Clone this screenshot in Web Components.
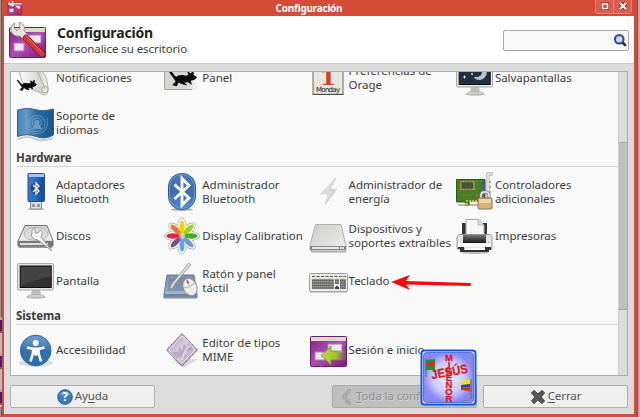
<!DOCTYPE html>
<html lang="es"><head><meta charset="utf-8"><title>Configuración</title>
<style>
html,body{margin:0;width:640px;height:417px;overflow:hidden;background:#aaa}
body{font-family:"Noto Sans","Open Sans",sans-serif;font-size:11.5px;color:#3c3c3c}
</style></head><body>
<settings-window></settings-window>
<script>
const wrench = `<path d="M5 0Q0 2 1 8Q3 14 10 13L14 17L18 12L14 8Q16 1 9 -1L10 5L7 8L4 5Z" fill="#e5e5df" stroke="#858880" stroke-width=".8"/><path d="M16 15L32 31" stroke="#871b22" stroke-width="6.4" stroke-linecap="round"/><path d="M16 15L32 31" stroke="#da3a30" stroke-width="5" stroke-linecap="round"/><path d="M16 13L31 28" stroke="#f07360" stroke-width="1"/>`;
const panelBase = `<defs><linearGradient id="p" x2="1" y2="1"><stop stop-color="#7e2486"/><stop offset=".5" stop-color="#b04fb2"/><stop offset="1" stop-color="#7c167f"/></linearGradient></defs><rect x="-.5" y="4.5" width="36" height="30" rx="1" fill="url(#p)" stroke="#642064"/><path d="M0 5H35V9H0Z" fill="#dcd9c6"/><path d="M17 12H31V20H17ZM4 20H14V28H4Z" fill="#f1e7f3" stroke="#ba73be"/>`;
const mouse = (x,y,s)=>`<g transform="translate(${x} ${y}) scale(${s})" fill="#080808"><path d="M0 0Q3 1 5 5L7 6Q10 3 16 5L19 4L18 1L21 3L23 0L23 4L26 6L24 8L20 9L21 12L18 10L14 11L16 13L12 12L9 10L7 14L4 13L7 10L5 7Z" stroke="#080808" stroke-width="1"/></g>`;
const monitor = screen => `<ellipse cx="18" cy="34" rx="10" ry="1.8" fill="#aaa" opacity=".7"/><path d="M14 26H22L23 33H13Z" fill="#bdbdbd"/><path d="M11 32H25L27 34H9Z" fill="#ddd" stroke="#aaa" stroke-width=".6"/><rect x="-.5" y=".5" width="36" height="26.5" rx="1.2" fill="#e2e2e0" stroke="#aaaaa7"/><rect x="2.2" y="3" width="31" height="21.5" fill="${screen}" stroke="#111"/>`;
const icons = {
 settings: panelBase+wrench,
 notify:`<defs><linearGradient id="g" x2="1"><stop stop-color="#fcfcfc"/><stop offset=".7" stop-color="#d3d3cf"/><stop offset="1" stop-color="#f5f5f1"/></linearGradient></defs><path d="M2 14Q0 4 10 5L24 11Q29 15 30 28Q31 35 25 35L21 32Q8 29 4 21Z" fill="url(#g)" stroke="#b0b0ab"/><path d="M18 8L27 29M24 28Q28 24 30 29L29 33L24 32Z" fill="none" stroke="#aaa9a0"/>${mouse(-1,20,.75)}`,
 panel:`<defs><linearGradient id="g"><stop offset=".6" stop-color="#d5d7d0"/><stop offset="1" stop-color="#d5d7d0" stop-opacity="0"/></linearGradient></defs><path d="M.5 2H35V29.500H.5Z" fill="url(#g)"/><path d="M.5 2V29.500H28" fill="none" stroke="#a3a69b"/>${mouse(5,11,1.05)}`,
 calendar:`<rect x="2" y="1" width="30" height="33.500" fill="#e6e6df" stroke="#686962"/><path d="M2 34.300H32.500" stroke="#4c4d49"/><text x="17" y="24.500" text-anchor="middle" font-family="DejaVu Serif" font-size="23" font-weight="bold" fill="#d44020">1</text><text x="17" y="32" text-anchor="middle" font-family="DejaVu Sans" font-size="7" textLength="24" fill="#111">Monday</text>`,
 saver:monitor('#20303e')+`<path d="M28 7Q33 17 23 20Q18 20 17 17Q26 18 25 10Z" fill="#b9c4ce"/><path d="M6 17h3M7.500 15.500v3M14 14h2M15 13v2" stroke="#fff" stroke-width=".8"/>`,
 flag:`<defs><linearGradient id="g"><stop stop-color="#4585ba"/><stop offset=".25" stop-color="#6599c4"/><stop offset=".55" stop-color="#286ba5"/><stop offset="1" stop-color="#1b568e"/></linearGradient></defs><path d="M0 34Q10 30 17 34Q25 37 35 33" stroke="#ccc" stroke-width="2" fill="none"/><path d="M-.5 5Q9 2 17 4.500T35.500 4V30Q27 35 18 31.500T-.5 31.500Z" fill="url(#g)" stroke="#23659d"/><g fill="none" stroke="#85b0d0" opacity=".75"><circle cx="19" cy="18.500" r="8" stroke-width=".8"/><circle cx="19" cy="17.500" r="4.500"/><path d="M9 13Q6 27 19 29Q32 27 29 13" stroke-width=".8"/></g><path d="M14 24L17 19Q15 15 19 15Q23 15 21 19L24 24Z" fill="#79a8cb" opacity=".8"/>`,
 usb:`<defs><linearGradient id="g"><stop stop-color="#3e7ccc"/><stop offset=".5" stop-color="#2867bd"/><stop offset="1" stop-color="#0e479d"/></linearGradient></defs><ellipse cx="18" cy="35" rx="9" ry="1.200" fill="#bbb"/><rect x="12.500" y="27" width="11" height="8" fill="#ddd" stroke="#8d8d88"/><path d="M14 30h3v3h-3zM19 30h3v3h-3z" fill="#989890"/><rect x="10" y="-.5" width="16.500" height="28" rx="1" fill="url(#g)" stroke="#225197"/><path d="M11 0H26V3H11Z" fill="#a5c5eb"/><circle cx="18.500" cy="14.500" r="6" fill="#234a86"/><path d="M15 11L21 17L18 20V9L21 12L15 18" fill="none" stroke="#fff" stroke-width="1.200"/>`,
 bluetooth:`<defs><linearGradient id="g" x2="0" y2="1"><stop stop-color="#4d79b7"/><stop offset=".5" stop-color="#3c6db0"/><stop offset="1" stop-color="#508dce"/></linearGradient></defs><ellipse cx="18" cy="35.500" rx="11" ry="1.500" fill="#aaa"/><rect x="4.500" y="-.5" width="27" height="36" rx="13" fill="url(#g)" stroke="#285990"/><rect x="5.500" y=".5" width="25" height="34" rx="12" fill="none" stroke="#83abd8" stroke-width=".7"/><path d="M10.500 10.500L25 24L18 31V4.500L25 11.500L10.500 25" fill="none" stroke="white" stroke-width="2.800"/>`,
 power:`<path d="M25 4L9.500 20H17L14 31L26 15H19.500Z" fill="#deded8" stroke="#d0d0ca" stroke-width=".7"/><path d="M24 6L18 16H23L15 29L24 17H18Z" fill="#c7c6bf"/>`,
 driver:`<path d="M1 31H29" stroke="#bbb" stroke-width="2"/><path d="M-.5 5.500H28V27H12V31H9V28H-.5Z" fill="#497d27" stroke="#315b1b"/><path d="M3 21H26M3 10V20M20 6V24" stroke="#658c35" stroke-width=".7"/><rect x="3.500" y="7" width="14" height="9" fill="#b7a935"/><rect x="4.700" y="8.200" width="11.600" height="6.600" fill="#4b504b"/><path d="M5 7V16M8 7V16M11 7V16M14 7V16" stroke="#4b5832" stroke-width=".7"/><g fill="#3659a0"><path d="M25 8h3v3h-3zM25 13h3v3h-3zM25 18h3v3h-3z"/></g><path d="M10 31V27H23V31" stroke="#c7bc42" stroke-width="2" stroke-dasharray="2 1" fill="none"/><path d="M36 0H31V28" stroke="#999" stroke-width="3" fill="none"/><path d="M36 0H31V28" stroke="#ecece8" stroke-width="1.700" fill="none"/><path d="M33 7v2M33 12v2M33 17v2" stroke="#aaa" stroke-width="2"/><path d="M24 25V21Q24 18 28 18T32 21V25" fill="none" stroke="#777" stroke-width="3"/><path d="M24 25V21Q24 18 28 18T32 21V25" fill="none" stroke="#ddd" stroke-width="1.800"/><rect x="21" y="24" width="14" height="11" rx="1" fill="#d4b17f" stroke="#9c7442"/><path d="M22 25H34V29H22Z" fill="#ebd4ae"/>`,
 disk:`<defs><linearGradient id="g" x2="0" y2="1"><stop stop-color="#ccc"/><stop offset=".6" stop-color="#f1f1ef"/><stop offset="1" stop-color="#888"/></linearGradient></defs><path d="M1 29H34" stroke="#bbb" stroke-width="2"/><path d="M7 7.500H29L35 23V28Q34 29 32 29H2Q0 29 0 27V23Z" fill="url(#g)" stroke="#777"/><path d="M0 23H35V28H0Z" fill="#777"/><path d="M2 26H30" stroke="#ddd" stroke-width="2"/><ellipse cx="18" cy="16" rx="12" ry="6.500" fill="#dcdcda" stroke="#b5b5b3"/><path d="M14 16Q13 11 17 10V15H20L22 12Q26 14 23 19L34 33L20 22Q16 22 14 19L13 17Z" fill="#f3f3f3" stroke="#888" stroke-width=".8"/>`,
 color:`<g transform="translate(18 18)"><g fill="#fff" stroke="#9c9c9c" stroke-width="4">${[0,45,90,135,180,225,270,315].map(a=>`<path transform="rotate(${a})" d="M0 -2C-4 -7 -3 -14 0 -16C3 -14 4 -7 0 -2Z"/>`).join('')}</g><g fill="#fff" stroke="#fff" stroke-width="2.800">${[0,45,90,135,180,225,270,315].map(a=>`<path transform="rotate(${a})" d="M0 -1C-4 -7 -3 -14 0 -16C3 -14 4 -7 0 -1Z"/>`).join('')}</g>${[['#f0d500',0],['#94d51d',45],['#3daf20',90],['#7795d4',135],['#63a4e7',180],['#79518d',225],['#df2537',270],['#ed7734',315]].map(([c,a])=>`<path transform="rotate(${a})" d="M0 0C-4 -7 -3 -14 0 -16C3 -14 4 -7 0 0Z" fill="${c}"/>`).join('')}<circle r="3" fill="#fff" opacity=".45"/></g>`,
 drive:`<defs><linearGradient id="g" x2="1" y2="1"><stop stop-color="#ccc"/><stop offset="1" stop-color="#eeeeeb"/></linearGradient></defs><path d="M0 33.500H35" stroke="#aaa" stroke-width="2"/><path d="M4.500 6.500H30L35 28V32Q35 33 33 33H1Q-1 33-1 31V27Z" fill="url(#g)" stroke="#b0b0ad"/><path d="M-1 28H35V32H-1Z" fill="#858583"/><path d="M1 30H28" stroke="#e5e5e5" stroke-width="2"/><path d="M29 30H33" stroke="#ddd" stroke-width="2"/>`,
 printer:`<defs><linearGradient id="g" x2="0" y2="1"><stop stop-color="#777"/><stop offset="1" stop-color="#151515"/></linearGradient></defs><ellipse cx="18" cy="34.500" rx="14" ry="1.500" fill="#bbb"/><path d="M5 5H30V19H5Z" fill="#333"/><path d="M9 17V1.500H22L27 7V17Z" fill="#f6f6f6" stroke="#aaa"/><path d="M21 2V7H27" fill="#ddd" stroke="#bbb"/><path d="M2 16.500H33L35 19V31H0V19Z" fill="#e4e4e2" stroke="#969693"/><path d="M6 17H29V25H6Z" fill="url(#g)"/><path d="M1 27H34" stroke="#fff" stroke-width="3"/><path d="M1 31V29H7V32H28V29H34V32H32V34H3V31Z" fill="#333"/><path d="M8 31H28" stroke="#fff" stroke-width="2"/><path d="M31 24h1v1h-1z" fill="#62b748"/>`,
 monitor:monitor('#303030')+`<path d="M3 4H33V13Q15 18 3 23Z" fill="#777" opacity=".27"/>`,
 pointer:`<defs><linearGradient id="g" x2="0" y2="1"><stop stop-color="#7b90ad"/><stop offset="1" stop-color="#aebdce"/></linearGradient></defs><path d="M3 12H30L33 31V35H0V31Z" fill="url(#g)" stroke="#657995"/><path d="M5 15H27L30 28H3Z" fill="#6f86a5" opacity=".65"/><path d="M0 31H33V34H0Z" fill="#71849e"/><path d="M26 .5L10 20L7 25" stroke="#888e90" stroke-width="3" fill="none"/><path d="M26 .5L10 20L7 25" stroke="#e5e7e7" stroke-width="1.700" fill="none"/><g transform="rotate(-25 26 24)"><ellipse cx="26" cy="24" rx="6.800" ry="9" fill="#ededeb" stroke="#8f918f"/><path d="M20 22Q26 25 32 22M26 15V23" stroke="#bbb" fill="none"/><ellipse cx="26" cy="18.500" rx="1" ry="1.800" fill="#c74444"/></g>`,
 keyboard:`<rect x="-1.500" y="10.500" width="38" height="18" rx="1" fill="#e7e7e4" stroke="#a1a19e"/><path d="M-1 29H36" stroke="#aaa"/><path d="M1 13.500H35" stroke="#555" stroke-width="1.200" stroke-dasharray="3 1.500"/><path d="M29 13.500H34" stroke="#62ab4a"/><path d="M1 16H23V26H1ZM24 16H28V21H24ZM29 16H35V26H29Z" fill="#9a9a98"/><path d="M1 17.500H23M1 20H23M1 22.500H23M1 25H23M29 17.500H35M29 20H35M29 22.500H35M29 25H35M24 17.500H28M24 20H28" stroke="#5d5d5b" stroke-width="1.600" stroke-dasharray="1.500 .5"/><path d="M24 26h4v-2h-1v-1h-2v1h-1z" fill="#444"/>`,
 access:`<defs><linearGradient id="g" x2="0" y2="1"><stop stop-color="#75a1cf"/><stop offset=".5" stop-color="#3471ad"/><stop offset="1" stop-color="#266eaf"/></linearGradient></defs><ellipse cx="18" cy="31" rx="17" ry="4" fill="#ddd"/><circle cx="17.700" cy="18.500" r="15.300" fill="url(#g)" stroke="#28659c"/><circle cx="17.700" cy="11" r="3" fill="white"/><path d="M9 15.500L15 17L15 21L12.500 29.500M26.500 15.500L20.500 17V21L23 29.500" stroke="white" stroke-width="2.600" fill="none" stroke-linejoin="round"/><path d="M14 15.500H21.500V22L18 24L14 22Z" fill="#fff"/>`,
 mime:`<defs><linearGradient id="g" x2="1" y2="1"><stop stop-color="#aa9caf"/><stop offset=".5" stop-color="#dacde0"/><stop offset="1" stop-color="#a894b6"/></linearGradient></defs><path d="M8 27H34L19 36Z" fill="#d7d7d7"/><path d="M18 1.500L33.500 18L18 34L2.500 18Z" fill="url(#g)" stroke="#775583" stroke-dasharray="1.500 .5"/><path d="M18 4L31 18L18 31L5 18Z" fill="none" stroke="#e8deeb"/><path d="M7 20L14 20L16 15L18 19L20 12L23 15L24 10L29 17L22 20L20 27L17 24L13 27Z" fill="#9d86a9" opacity=".5"/><path d="M26 14Q21 16 18 28" stroke="#e8deeb" stroke-width="1.500" fill="none"/>`,
 session:panelBase+`<defs><linearGradient id="g"><stop stop-color="#bdd658"/><stop offset=".6" stop-color="#9ec22a"/><stop offset="1" stop-color="#9ab53e" stop-opacity=".1"/></linearGradient></defs><path d="M10 23.500L20 14V19H35V28H20V33Z" fill="url(#g)"/><path d="M30 19H20V14L10 23.500L20 33V28H29" fill="none" stroke="#719019" stroke-width=".8"/>`,
 search:`<path d="M23 23L31 31" stroke="#30343a" stroke-width="7" stroke-linecap="round"/><circle cx="16" cy="16" r="11" fill="#cdd9f1" stroke="#34498c" stroke-width="5.500"/><path d="M9 15Q10 8 18 9" fill="none" stroke="#8faae0" stroke-width="3"/>`,
 help:`<circle cx="18" cy="18" r="16.500" fill="#397bb7" stroke="#235884" stroke-width="2"/><path d="M4 13Q18 -5 32 13Q20 19 4 13" fill="#75a5d0" opacity=".65"/><text x="18" y="28" text-anchor="middle" font-family="Noto Sans" font-weight="bold" font-size="27" fill="white">?</text>`,
 close:`<path d="M3 9L9 3L18 11L27 3L33 9L25 18L33 27L27 33L18 25L9 33L3 27L11 18Z" fill="#555853" stroke="#444" stroke-width="2"/>`,
 back:`<path d="M25 4L13 18L25 32" fill="none" stroke="#929292" stroke-width="7" stroke-linecap="round"/><path d="M25 4L13 18L25 32" fill="none" stroke="#b5b5b5" stroke-width="4" stroke-linecap="round"/>`
};
const define=(name,html)=>customElements.define(name,class extends HTMLElement{
 constructor(){super();this.attachShadow({mode:'open'}).innerHTML=html}
});
customElements.define('app-icon',class extends HTMLElement{
 constructor(){super();this.attachShadow({mode:'open'})}
 connectedCallback(){this.shadowRoot.innerHTML=`<style>:host{display:block;width:36px;height:36px;flex:none}svg{display:block;width:100%;height:100%;overflow:visible}</style><svg viewBox="0 0 36 36" aria-hidden="true">${icons[this.getAttribute('name')]}</svg>`}
});
customElements.define('setting-item',class extends HTMLElement{
 constructor(){super();this.attachShadow({mode:'open'})}
 connectedCallback(){this.shadowRoot.innerHTML=`<style>:host{display:flex;align-items:center;gap:2px;height:44.4px;line-height:14px;white-space:nowrap;letter-spacing:-.03px}app-icon{margin-left:2px}</style><app-icon name="${this.getAttribute('icon')}"></app-icon><span><slot></slot></span>`}
});
customElements.define('settings-section',class extends HTMLElement{
 constructor(){super();this.attachShadow({mode:'open'})}
 connectedCallback(){const h=this.getAttribute('heading');this.shadowRoot.innerHTML=`<style>:host{display:block}h2{box-sizing:border-box;height:18px;line-height:18px;margin:4.5px 0 2.5px;border-bottom:1px solid #d8d8d8;font-size:11.5px;font-weight:700;letter-spacing:-.1px}div{display:grid;grid-template-columns:repeat(4,146.3px)}</style>${h?`<h2>${h}</h2>`:''}<div><slot></slot></div>`}
});
define('title-bar',`<style>:host{display:flex;height:16px;background:#d64a38;color:#fff;align-items:center;padding:0 2px 0 4px;font-weight:700;font-size:10px}app-icon{width:14px;height:14px}span{flex:1;text-align:center;line-height:15px;padding-left:1px;letter-spacing:-.25px}svg{width:37px;height:14px;align-self:flex-start}</style><app-icon name="settings"></app-icon><span>Configuración</span><svg viewBox="0 0 37 14"><path d="M.5 0V11Q.5 13.500 3 13.500H34Q36.500 13.500 36.500 11V0M18.500 0V13" fill="#dc5e4e" stroke="#e58378"/><path d="M7.500 4H12.500V8.500H7.500Z" fill="none" stroke="#8d2b20" stroke-width="3"/><path d="M7.500 4H12.500V8.500H7.500Z" fill="none" stroke="white" stroke-width="1.700"/><path d="M25 3L31 9M31 3L25 9" stroke="#8d2b20" stroke-width="4"/><path d="M25 3L31 9M31 3L25 9" stroke="white" stroke-width="2.200"/></svg>`);
define('search-box',`<style>:host{box-sizing:border-box;display:flex;align-items:center;justify-content:flex-end;width:126px;height:21px;background:#f8f8f8;border:1px solid #a9a9a9;border-radius:2px;padding-right:1px}app-icon{width:14px;height:14px}</style><app-icon name="search"></app-icon>`);
define('settings-header',`<style>:host{box-sizing:border-box;height:48px;background:#fff;border-bottom:1px solid #c8c8c8;display:flex;align-items:center;padding:0 5px 0 6px}app-icon{margin:2px 0 0 -.3px}div{margin-left:11.300px;flex:1}h1{font-size:14px;line-height:17px;margin:0;color:#222;letter-spacing:-.15px}p{margin:0;line-height:15px;letter-spacing:-.07px}search-box{margin-top:1px}</style><app-icon name="settings"></app-icon><div><h1>Configuración</h1><p>Personalice su escritorio</p></div><search-box></search-box>`);
define('scroll-bar',`<style>:host{display:block;box-sizing:border-box;width:10px;background:#dcdcdc;border-left:1px solid #ccc;padding-top:70px}div{box-sizing:border-box;height:168px;background:#c0c0c0;border:1px solid #a8a8a8;border-width:1px 0}</style><div></div>`);
define('action-button',`<style>:host{box-sizing:border-box;width:145px;height:23px;border:1px solid #adadad;border-radius:2px;background:#efefef;display:flex;align-items:center;justify-content:center;gap:2px;color:#555;white-space:nowrap;font-size:11.500px;letter-spacing:-.1px}:host([disabled]){background:#bebebe;border-color:#aaa;color:#929292;text-shadow:1px 1px #d0d0d0;justify-content:flex-start;padding-left:5px;overflow:hidden;gap:2px}::slotted(app-icon){width:16px;height:16px}span{line-height:18px;margin-top:-1px}</style><slot name="icon"></slot><span><slot></slot></span>`);
define('brand-badge',`<style>:host{position:absolute;left:421px;top:350px;width:56px;height:56px}svg{display:block;overflow:visible}</style><svg width="56" height="56"><defs><radialGradient id="g"><stop stop-color="#f2f1ff"/><stop offset=".65" stop-color="#c9c8fc"/><stop offset="1" stop-color="#8787f2"/></radialGradient></defs><rect x=".5" y=".5" width="54" height="54" rx="3" fill="#fff" stroke="#1456e7" stroke-width="2"/><rect x="2.500" y="2.500" width="50" height="50" rx="3" fill="url(#g)" stroke="#537bd6" stroke-width="1"/><path d="M5 9V27" stroke="#666"/><path d="M5 10L14 9V20L5 20Z" fill="#228f35"/><path d="M5 13L14 12V16L5 16Z" fill="#e22a28"/><path d="M50 29V49" stroke="#765b50"/><path d="M40 31L49 29V40L40 40Z" fill="#f7df15"/><path d="M40 35L49 34V37L40 38Z" fill="#2346b9"/><path d="M40 38L49 37V41L40 40Z" fill="#d52d23"/><g font-family="Liberation Sans" font-weight="bold" fill="#e71825" stroke="#c01c2c" stroke-width=".3"><g font-size="9.5" text-anchor="middle"><text x="28" y="11">M</text><text x="28" y="17.500">I</text><text x="28" y="24">S</text><text x="28" y="31">E</text><text x="28" y="38">Ñ</text><text x="28" y="45">O</text><text x="28" y="52">R</text></g><text transform="rotate(-10 12 29)" x="11" y="29" font-size="12.500" textLength="37" lengthAdjust="spacingAndGlyphs">JESÚS</text></g><path d="M41 52L45 50L46 51L49 48" stroke="#666" fill="none" stroke-width=".6"/></svg>`);
define('red-arrow',`<style>:host{position:absolute;left:391px;top:274px}svg{display:block}</style><svg width="82" height="17"><path d="M0 8L19 1L15 7L79 9Q81 10.500 79 12L15 10.500L19 16Z" fill="#f80808"/></svg>`);
define('settings-window',`<style>
:host{display:flex;flex-direction:column;box-sizing:border-box;position:relative;width:640px;height:417px;background:linear-gradient(90deg,#999 0 2px,#b3b3b3 2px)}
.edge{box-sizing:border-box;height:417px;border:solid #d64a38;border-width:0 3px 3px 2px;margin:0 3px 0 2px;display:flex;flex-direction:column;outline:1px solid #a44035;outline-offset:0}
main{background:#dcdcdc;flex:1;padding:7px 6px 6px;display:flex;flex-direction:column;gap:9px;min-height:0}
.pane{box-sizing:border-box;height:305px;border:1px solid #aaa;background:#f9f9f9;display:flex;overflow:hidden}
.content{margin-top:-16px;margin-left:5px;width:602px;flex:none;height:319px}
scroll-bar{margin-left:auto;height:303px}
footer{display:flex;gap:6px}footer action-button:first-child{margin-right:auto}
.marks{position:absolute;left:0;top:317px;width:2px;height:90px;background:repeating-linear-gradient(#aaa 0 3px,#4f167c 3px 14px,#666 14px 16px,#bbb 16px 36px)}
u{text-underline-offset:2px;text-decoration-thickness:1px}
</style><div class="marks"></div><div class="edge"><title-bar></title-bar><settings-header></settings-header><main><div class="pane"><div class="content">
<settings-section><setting-item icon="notify">Notificaciones</setting-item><setting-item icon="panel">Panel</setting-item><setting-item icon="calendar">Preferencias de<br>Orage</setting-item><setting-item icon="saver">Salvapantallas</setting-item><setting-item icon="flag">Soporte de<br>idiomas</setting-item></settings-section>
<settings-section heading="Hardware"><setting-item icon="usb">Adaptadores<br>Bluetooth</setting-item><setting-item icon="bluetooth">Administrador<br>Bluetooth</setting-item><setting-item icon="power">Administrador de<br>energía</setting-item><setting-item icon="driver">Controladores<br>adicionales</setting-item><setting-item icon="disk">Discos</setting-item><setting-item icon="color">Display Calibration</setting-item><setting-item icon="drive">Dispositivos y<br>soportes extraíbles</setting-item><setting-item icon="printer">Impresoras</setting-item><setting-item icon="monitor">Pantalla</setting-item><setting-item icon="pointer">Ratón y panel<br>táctil</setting-item><setting-item icon="keyboard">Teclado</setting-item></settings-section>
<settings-section heading="Sistema"><setting-item icon="access">Accesibilidad</setting-item><setting-item icon="mime">Editor de tipos<br>MIME</setting-item><setting-item icon="session">Sesión e inicio</setting-item></settings-section>
</div><scroll-bar></scroll-bar></div><footer><action-button><app-icon slot="icon" name="help"></app-icon>Ay<u>u</u>da</action-button><action-button disabled><app-icon slot="icon" name="back"></app-icon><u>T</u>oda la configuración</action-button><action-button><app-icon slot="icon" name="close"></app-icon><u>C</u>errar</action-button></footer></main></div><red-arrow></red-arrow><brand-badge></brand-badge>`);
</script></body></html>
